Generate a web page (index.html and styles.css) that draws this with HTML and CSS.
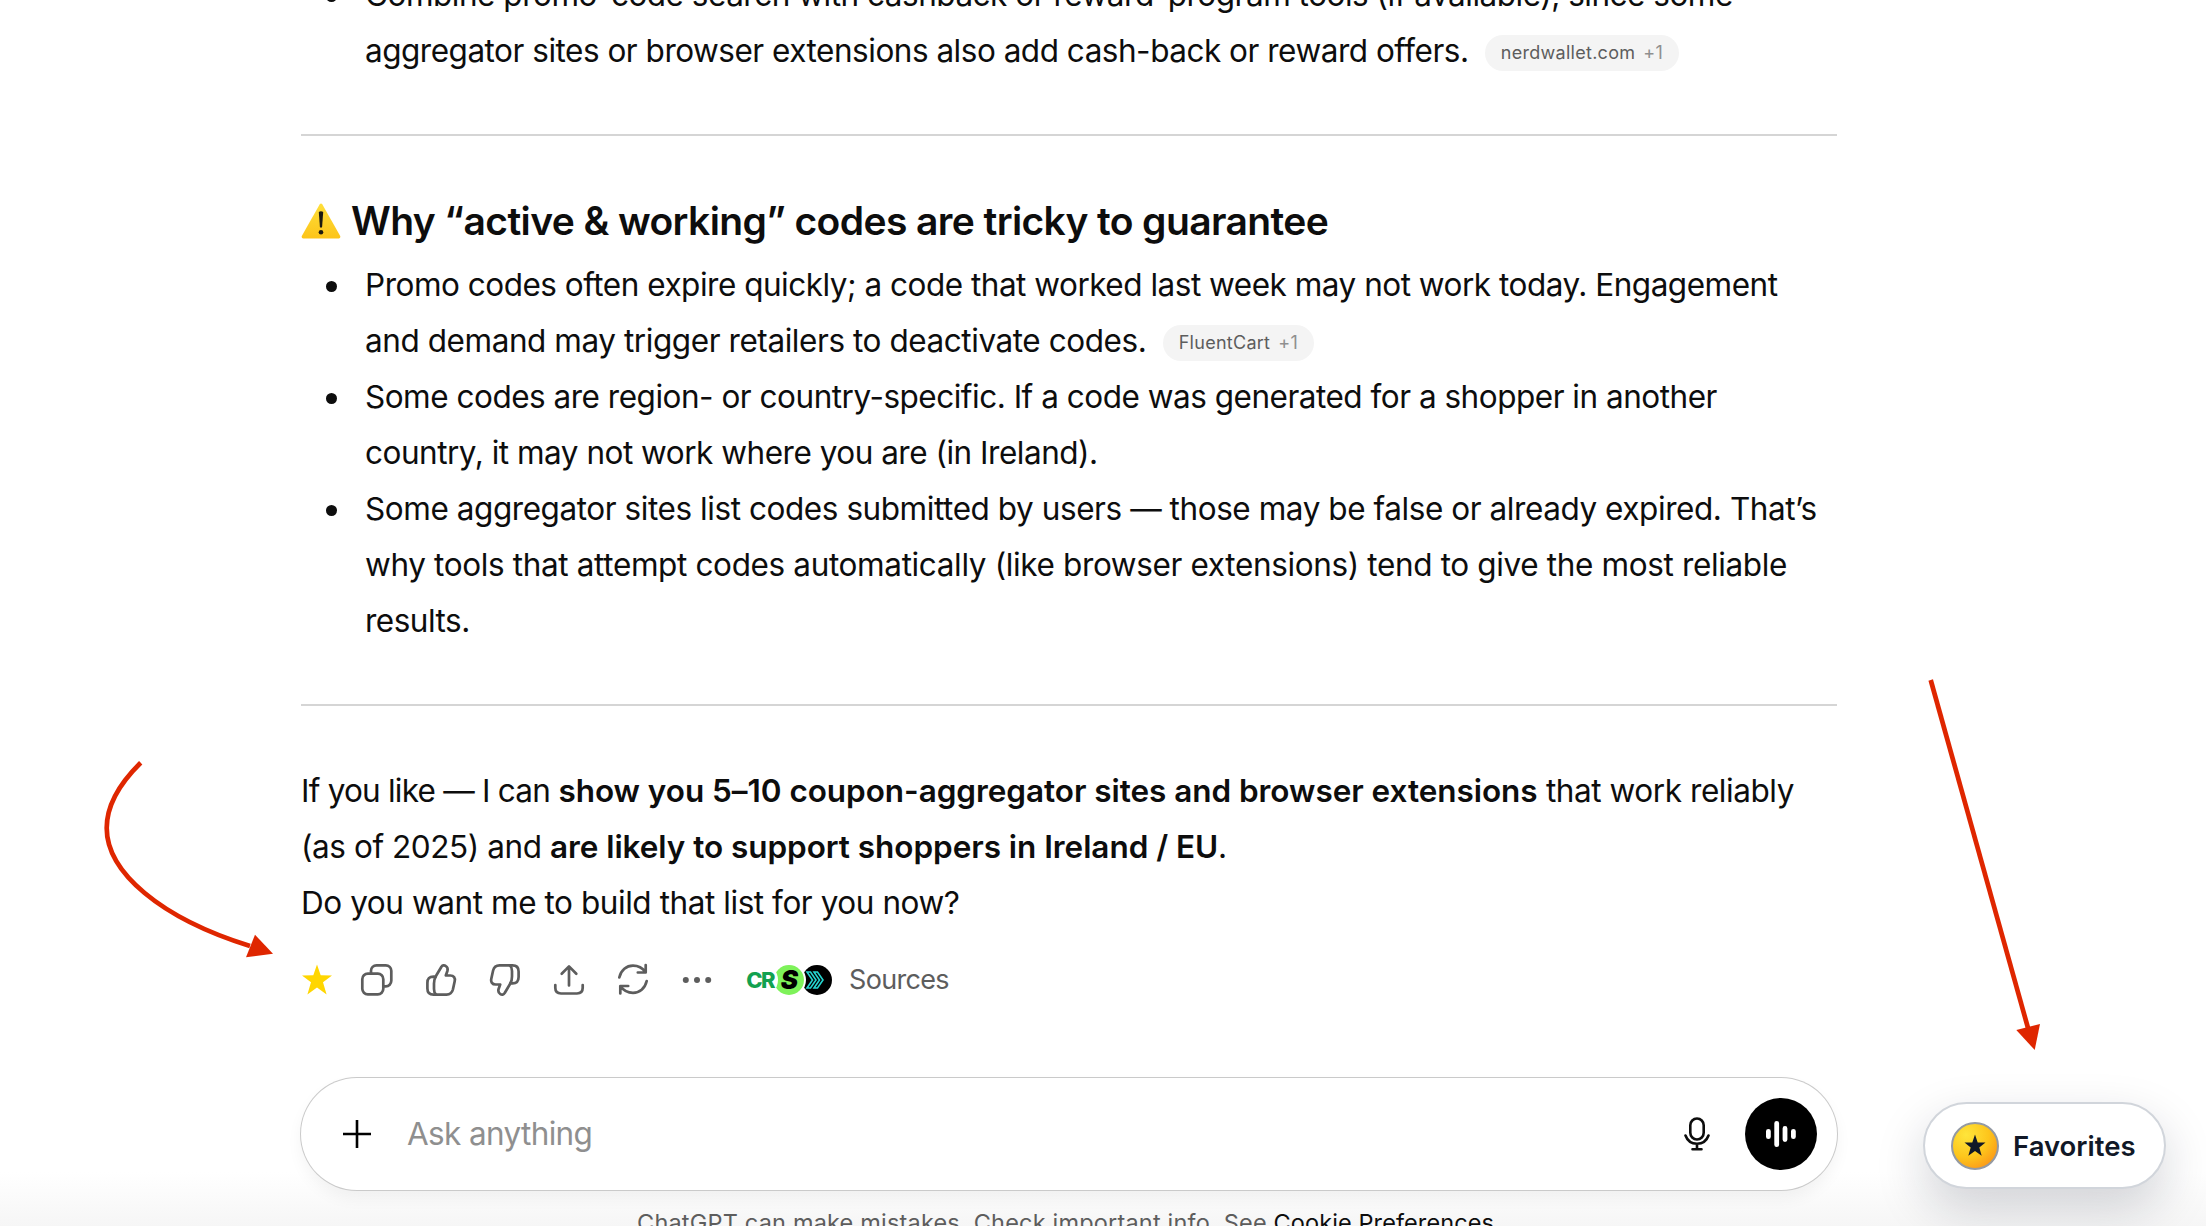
FILE: index.html
```
<!DOCTYPE html>
<html lang="en">
<head>
  <meta charset="UTF-8">
  <meta name="viewport" content="width=device-width, initial-scale=1.0">
  <title>ChatGPT</title>
  <link rel="stylesheet" href="styles.css">
</head>
<body>
  <main class="thread">
    <article class="message">
      <ul class="list">
        <li>
          Combine promo-code search with cashback or reward-program tools (if available), since some<br>
          aggregator sites or browser extensions also add cash-back or reward offers.
          <a class="cite">nerdwallet.com <span>+1</span></a>
        </li>
      </ul>

      <hr>

      <h2 class="title">
        <svg class="warning" viewBox="0 0 40 36">
          <defs>
            <linearGradient id="warn" x1="0" y1="0" x2="0" y2="1">
              <stop offset="0" stop-color="#ffdf3a"/>
              <stop offset="1" stop-color="#fcc419"/>
            </linearGradient>
          </defs>
          <path d="M18.600 1.500 Q20 -.4 21.400 1.500 L39.200 33 Q39.800 35.500 37.800 35.500 H2.200 Q.2 35.500 .8 33 Z" fill="url(#warn)"/>
          <path d="M17.800 9 Q20 7.500 22.200 9 L21.100 24 Q20 25.500 18.900 24 Z" fill="#1c1a10"/>
          <circle cx="20" cy="29.300" r="2.300" fill="#1c1a10"/>
        </svg>
        <span>Why “active &amp; working” codes are tricky to guarantee</span>
      </h2>
      <ul class="list">
        <li>
          Promo codes often expire quickly; a code that worked last week may not work today. Engagement<br>
          <span class="loose">and demand may trigger retailers to deactivate codes.</span>
          <a class="cite">FluentCart <span>+1</span></a>
        </li>
        <li>
          Some codes are region- or country-specific. If a code was generated for a shopper in another<br>
          country, it may not work where you are (in Ireland).
        </li>
        <li>
          <span class="loose">Some aggregator sites list codes submitted by users — those may be false or already expired. That’s</span><br>
          <span class="looser">why tools that attempt codes automatically (like browser extensions) tend to give the most reliable</span><br>
          results.
        </li>
      </ul>

      <hr>

      <p class="closing">
        <span class="tight">If you like — I can</span> <strong>show you 5–10 coupon-aggregator sites and browser extensions</strong> that work reliably<br>
        (as of 2025) and <strong>are likely to support shoppers in Ireland / EU</strong>.<br>
        Do you want me to build that list for you now?
      </p>
    </article>

    <div class="toolbar">
      <button class="tool star" aria-label="Favorite">
        <svg viewBox="-20 -20 40 40"><path d="M0 -15.500 L3.700 -4.800 L15 -4.600 L6 2.300 L9.600 14.600 L0 7.600 L-9.600 14.600 L-6 2.300 L-15 -4.600 L-3.700 -4.800 Z"/></svg>
      </button>
      <button class="tool" aria-label="Copy">
        <svg viewBox="-20 -20 40 40">
          <rect x="-14.700" y="-6.300" width="21" height="20.600" rx="5.500"/>
          <path d="M-6 -6.500 V-9.200 A5.500 5.500 0 0 1 -.5 -14.700 H8.800 A5.500 5.500 0 0 1 14.300 -9.200 V.8 A5.500 5.500 0 0 1 8.800 6.300 H6.500"/>
        </svg>
      </button>
      <button class="tool" aria-label="Good response">
        <svg viewBox="-20 -20 40 40">
          <path d="M-5.500 -3.200 L.3 -13 C1.200 -14.900 3.200 -15.200 4.800 -14 C6.700 -12.700 7 -11 6.400 -9 L4.800 -4.500 H9.300 C12.800 -4.500 14.400 -2 13.700 1.200 L11.900 9.500 C11 13 8.800 14.600 5.500 14.600 H-7.500 C-11.500 14.600 -13.600 12.500 -13.600 8.500 V3 C-13.600 -1.500 -11.500 -3.300 -7.500 -3.300 Z"/>
          <path d="M-5.300 -3.200 C-6.800 -1 -7 1 -7 3.500 V9 C-7 11.500 -6.500 13.300 -5 14.600"/>
        </svg>
      </button>
      <button class="tool" aria-label="Bad response">
        <svg class="flip" viewBox="-20 -20 40 40">
          <path d="M-5.500 -3.200 L.3 -13 C1.200 -14.900 3.200 -15.200 4.800 -14 C6.700 -12.700 7 -11 6.400 -9 L4.800 -4.500 H9.300 C12.800 -4.500 14.400 -2 13.700 1.200 L11.900 9.500 C11 13 8.800 14.600 5.500 14.600 H-7.500 C-11.500 14.600 -13.600 12.500 -13.600 8.500 V3 C-13.600 -1.500 -11.500 -3.300 -7.500 -3.300 Z"/>
          <path d="M-5.300 -3.200 C-6.800 -1 -7 1 -7 3.500 V9 C-7 11.500 -6.500 13.300 -5 14.600"/>
        </svg>
      </button>
      <button class="tool" aria-label="Share">
        <svg viewBox="-20 -20 40 40">
          <path d="M0 5.500 V-13.500 M-7.300 -6.300 L0 -13.600 L7.300 -6.300"/>
          <path d="M-13.700 5 V7.800 C-13.700 11.800 -12 13.500 -8 13.500 H8 C12 13.500 13.700 11.800 13.700 7.800 V5"/>
        </svg>
      </button>
      <button class="tool" aria-label="Regenerate">
        <svg viewBox="-20 -20 40 40">
          <path d="M-13.700 -2.500 C-12 -10 -6.500 -14.300 0 -14.300 C5 -14.300 9.500 -12 12.300 -8 M12.700 -15 V-7.500 H4.800"/>
          <path d="M13.700 1 C12 8.500 6.500 12.800 0 12.800 C-5 12.800 -9.500 10.500 -12.300 6.500 M-12.700 13.500 V6 H-4.800"/>
        </svg>
      </button>
      <button class="tool dots" aria-label="More">
        <svg viewBox="-20 -20 40 40">
          <circle cx="-11.200" cy="0" r="3"/><circle cx="0" cy="0" r="3"/><circle cx="11.200" cy="0" r="3"/>
        </svg>
      </button>
      <button class="sources">
        <span class="favicons">
          <span class="favicon cr">CR</span>
          <span class="favicon s">S</span>
          <span class="favicon arrow">
            <svg viewBox="0 0 30 30">
              <path d="M5 7 H8.500 L14 15 L8.500 23 H5 L10.500 15 Z M12 7 H15.500 L21 15 L15.500 23 H12 L17.500 15 Z"/>
            </svg>
          </span>
        </span>
        <span>Sources</span>
      </button>
    </div>

    <form class="composer">
      <svg class="plus" viewBox="0 0 28 28"><path d="M14 0 V28 M0 14 H28"/></svg>
      <span class="placeholder">Ask anything</span>
      <svg class="mic" viewBox="0 0 26 34">
        <rect x="6.300" y="1.500" width="13.400" height="21" rx="6.700"/>
        <path d="M1.500 18.500 C3.500 24 7.500 26.700 13 26.700 C18.500 26.700 22.500 24 24.500 18.500 M13 26.700 V32 M8.500 32.300 H17.500"/>
      </svg>
      <span class="voice">
        <svg viewBox="-16 -16 32 32"><path d="M-12.600 -2.700 V2.700 M-4.300 -10.700 V10.700 M4 -5.500 V5.500 M12.400 -2.700 V2.700"/></svg>
      </span>
    </form>

    <footer class="disclaimer">ChatGPT can make mistakes. Check important info. See <a>Cookie Preferences</a>.</footer>
  </main>

  <button class="favorites">
    <span class="badge">
      <svg viewBox="-12 -12 24 24"><path d="M0 -11.500 L2.700 -3.600 L10.500 -3.500 L4.300 1.500 L6.700 9.800 L0 5 L-6.700 9.800 L-4.300 1.500 L-10.500 -3.500 L-2.700 -3.600 Z"/></svg>
    </span>
    Favorites
  </button>

  <!-- callout arrows -->
  <svg class="callouts" viewBox="0 0 2206 1226">
    <path class="line" d="M140.700 762.700 C118 785 106.700 806 106.700 828 C106.700 872 160 918 250 946"/>
    <path class="head" d="M255 934.700 L273 953.700 L246 957.300 Z"/>
    <path class="line" d="M1930.700 680 L2028 1028"/>
    <path class="head" d="M2016.300 1030 L2040 1024 L2034.700 1050 Z"/>
  </svg>
</body>
</html>
```
FILE: styles.css
```
:root {
  --text: #0d0d0d;
  --muted: #5d5d5d;
  --line: #d5d5d5;
  --red: #df2600;
}
* {
  box-sizing: border-box;
}
body {
  margin: 0;
  width: 2206px;
  height: 1226px;
  overflow: hidden;
  background: linear-gradient(#fff 1172px, #f6f6f6 1226px);
  color: var(--text);
  font-family: Inter, "Liberation Sans", sans-serif;
  font-size: 31.5px;
  line-height: 56px;
  letter-spacing: -0.0155em;
}
button {
  border: none;
  background: none;
  padding: 0;
  font: inherit;
  letter-spacing: inherit;
  color: inherit;
}
.thread {
  width: 1536px;
  height: 1226px;
  margin-left: 301px;
  overflow: clip;
  overflow-clip-margin: 60px;
}
.message {
  margin-top: -33px;
  white-space: nowrap;
}
.list {
  margin: 0;
  padding: 0;
  list-style: none;
}
.list li {
  position: relative;
  padding-left: 64px;
}
.list li::before {
  content: "";
  position: absolute;
  left: 25px;
  top: 24px;
  width: 11px;
  height: 11px;
  border-radius: 50%;
  background: var(--text);
}
.cite {
  display: inline-flex;
  align-items: center;
  gap: 8px;
  height: 36px;
  margin-left: 8px;
  padding: 0 16px;
  border-radius: 18px;
  background: #f4f4f4;
  color: var(--muted);
  font-size: 18px;
  line-height: 36px;
  letter-spacing: 0.015em;
  vertical-align: 3px;
}
.cite span {
  color: #8f8f8f;
}
hr {
  height: 2px;
  margin: 55px 0 57px;
  border: none;
  background: var(--line);
}
.title {
  display: flex;
  align-items: center;
  gap: 10px;
  height: 64px;
  margin: 0;
  padding-bottom: 8px;
  font-size: 39px;
  font-weight: 600;
  letter-spacing: -0.0155em;
}
.warning {
  width: 40px;
  height: 36px;
}
.loose {
  letter-spacing: -0.0138em;
}
.looser {
  letter-spacing: -0.0115em;
}
.closing {
  margin: 0;
  letter-spacing: -0.0138em;
}
.closing strong {
  font-weight: 600;
  letter-spacing: -0.0015em;
}
.closing .tight {
  letter-spacing: -0.0247em;
}
.toolbar {
  display: flex;
  align-items: center;
  height: 64px;
  margin-top: 17px;
}
.tool {
  display: flex;
  align-items: center;
  justify-content: center;
  width: 64px;
  height: 64px;
}
.tool svg {
  width: 40px;
  height: 40px;
  fill: none;
  stroke: var(--muted);
  stroke-width: 2.7;
  stroke-linecap: round;
  stroke-linejoin: round;
}
.tool.star {
  width: 44px;
  padding-right: 12px;
}
.tool.star svg {
  flex: none;
  fill: #ffd600;
  stroke: none;
}
.tool.dots svg {
  fill: var(--muted);
  stroke: none;
}
.tool .flip {
  transform: rotate(180deg);
}
.sources {
  display: flex;
  align-items: center;
  gap: 17px;
  margin-left: 17px;
  color: var(--muted);
  font-size: 27px;
  letter-spacing: -0.025em;
}
.favicons {
  display: flex;
}
.favicon {
  position: relative;
  display: flex;
  align-items: center;
  justify-content: center;
  width: 30px;
  height: 30px;
  margin-right: -2px;
  border-radius: 50%;
  box-shadow: 0 0 0 2px #fff;
  line-height: 30px;
}
.favicon.cr {
  z-index: 3;
  padding-right: 2px;
  background: #fff;
  color: #12a150;
  font-size: 22px;
  font-weight: 800;
  letter-spacing: -0.08em;
}
.favicon.s {
  z-index: 2;
  background: #7ef25a;
  color: #000;
  font-size: 26px;
  font-weight: 900;
  font-style: italic;
}
.favicon.arrow {
  z-index: 1;
  margin-right: 0;
  background: #000;
}
.favicon svg {
  width: 30px;
  height: 30px;
  fill: none;
  stroke: #25d5d0;
  stroke-width: 1.6;
}
.composer {
  display: flex;
  align-items: center;
  height: 112px;
  margin-top: 66px;
  padding: 0 20px 0 42px;
  border-radius: 56px;
  background: #fff;
  box-shadow: 0 0 0 1px #cacaca, 0 8px 16px rgba(0, 0, 0, 0.05);
}
.plus {
  width: 28px;
  height: 28px;
  stroke: #000;
  stroke-width: 2.6;
}
.placeholder {
  flex: 1;
  margin-left: 36px;
  color: #8f8f8f;
  letter-spacing: -0.0205em;
}
.mic {
  width: 26px;
  height: 34px;
  margin-right: 35px;
  fill: none;
  stroke: #0d0d0d;
  stroke-width: 2.6;
  stroke-linecap: round;
}
.voice {
  display: flex;
  align-items: center;
  justify-content: center;
  width: 72px;
  height: 72px;
  border-radius: 50%;
  background: #000;
}
.voice svg {
  width: 32px;
  height: 32px;
  stroke: #fff;
  stroke-width: 4.8;
  stroke-linecap: round;
}
.disclaimer {
  height: 60px;
  margin-top: 5px;
  text-align: center;
  color: var(--muted);
  font-size: 23.5px;
  letter-spacing: 0.008em;
  white-space: nowrap;
}
.disclaimer a {
  color: var(--text);
  letter-spacing: 0.004em;
}
.favorites {
  position: absolute;
  left: 1923px;
  top: 1102px;
  display: flex;
  align-items: center;
  gap: 14px;
  width: 243px;
  height: 87px;
  padding-left: 26px;
  border: 2px solid #d1d5db;
  border-radius: 44px;
  background: #fff;
  box-shadow: 0 20px 50px rgba(15, 23, 42, 0.18);
  color: #111827;
  font-size: 27.5px;
  font-weight: 600;
  letter-spacing: 0;
}
.badge {
  display: flex;
  align-items: center;
  justify-content: center;
  width: 48px;
  height: 48px;
  border: 2px solid #949aa3;
  border-radius: 50%;
  background: radial-gradient(circle at 30% 25%, #ffe53b, #fdc51b 50%, #f97316 110%);
}
.badge svg {
  width: 24px;
  height: 24px;
  fill: #111827;
}
.callouts {
  position: absolute;
  left: 0;
  top: 0;
  width: 2206px;
  height: 1226px;
  pointer-events: none;
}
.callouts .line {
  fill: none;
  stroke: var(--red);
  stroke-width: 4.7;
}
.callouts .head {
  fill: var(--red);
}
```
